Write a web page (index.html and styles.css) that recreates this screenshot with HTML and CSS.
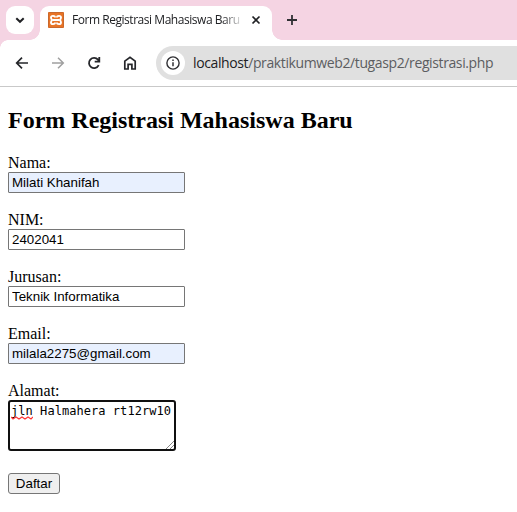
FILE: index.html
```html
<!DOCTYPE html>
<html lang="id">
<head>
<meta charset="utf-8">
<title>Form Registrasi Mahasiswa Baru</title>
<link rel="stylesheet" href="styles.css">
</head>
<body>
<header class="tabs">
  <div class="tab-search"><svg width="28" height="28" viewBox="0 0 28 28"><path d="M10.3 12.2 14 15.8l3.7-3.6" fill="none" stroke="#202124" stroke-width="2"/></svg></div>
  <div class="tab">
    <svg class="favicon" width="16" height="16" viewBox="0 0 16 16"><rect width="16" height="16" rx="1" fill="#e87325"/><rect x=".5" y=".5" width="15" height="15" rx="1" fill="none" stroke="#c8682d"/><g fill="none" stroke="#fff" stroke-width="1.9"><path d="M7 5.6V5.2Q7 3.9 5 3.9T3 5.5Q3 7.1 4.2 8 3 8.9 3 10.5 3 12.1 5 12.1T7 10.8V10.4M9 5.6V5.2Q9 3.9 11 3.9T13 5.5Q13 7.1 11.8 8 13 8.9 13 10.5 13 12.1 11 12.1T9 10.8V10.4M5 8h6"/></g></svg>
    <span class="tab-title">Form Registrasi Mahasiswa Baru</span>
    <svg class="close" width="10" height="10" viewBox="0 0 10 10"><path d="m1.5 1.5 7 7m0-7-7 7" stroke="#202124" stroke-width="1.7"/></svg>
  </div>
  <svg class="new-tab" width="12" height="12" viewBox="0 0 12 12"><path d="M6 1v10M1 6h10" stroke="#303034" stroke-width="1.8"/></svg>
</header>
<nav class="toolbar">
  <svg width="16" height="16" viewBox="0 0 16 16" fill="none" stroke="#25262a" stroke-width="1.7"><path d="M14 8H3M8 2.7 2.7 8 8 13.3"/></svg>
  <svg width="16" height="16" viewBox="0 0 16 16" fill="none" stroke="#a0a0a0" stroke-width="1.5"><path d="M2 8h11M8 2.7 13.3 8 8 13.3"/></svg>
  <svg width="16" height="16" viewBox="0 0 16 16" fill="none" stroke="#25262a" stroke-width="1.8"><path d="M12.7 10.2A5.1 5.1 0 1 1 12 4.7L13 6M13.3 2v4.6H8.7"/></svg>
  <svg width="16" height="16" viewBox="0 0 16 16" fill="none" stroke="#25262a" stroke-width="1.7"><path d="M2.8 6.1 8 2.2l5.2 3.9v7.9H9.9V9.3H6.1V14H2.8z"/></svg>
  <div class="address">
    <span class="info"><svg width="16" height="16" viewBox="0 0 16 16"><circle cx="8" cy="8" r="6.1" fill="none" stroke="#303034" stroke-width="1.4"/><path d="M8 7.3v4M8 4.6v1.5" stroke="#303034" stroke-width="1.5"/></svg></span>
    <span class="url"><b>localhost</b>/praktikumweb2/tugasp2/registrasi.php</span>
  </div>
</nav>
<main>
  <h2>Form Registrasi Mahasiswa Baru</h2>
  <form>
    <div class="field"><label for="nama">Nama:</label><input id="nama" class="autofill" value="Milati Khanifah"></div>
    <div class="field"><label for="nim">NIM:</label><input id="nim" value="2402041"></div>
    <div class="field"><label for="jurusan">Jurusan:</label><input id="jurusan" value="Teknik Informatika"></div>
    <div class="field"><label for="email">Email:</label><input id="email" class="autofill" value="milala2275@gmail.com"></div>
    <div class="field"><label>Alamat:</label><div class="textarea" role="textbox"><span class="misspelled">jln<svg class="squiggle" width="22" height="4" viewBox="0 0 22 4"><path d="m0 1 2 2 3-2 3 2 3-2 3 2 3-2 3 2 2-2" fill="none" stroke="#f33" stroke-width="1.2"/></svg></span> Halmahera rt12rw10<svg class="grip" width="8" height="8" viewBox="0 0 8 8"><path d="m0 8 8-8M4 8l4-4" stroke="#666" stroke-width=".8"/></svg></div></div>
    <button type="button">Daftar</button>
  </form>
</main>
</body>
</html>
```
FILE: styles.css
```css
* { box-sizing: border-box; }
body { margin: 0; background: #fff; color: #000; font: 16px/18px "Liberation Serif", serif; overflow: hidden; }
svg { display: block; flex: none; }
.tabs { display: flex; height: 40px; padding: 6px 6px 0; background: #f5d4e3; }
.tab-search { width: 28px; height: 28px; border-radius: 9px; background: #fff; }
.tab { position: relative; display: flex; align-items: center; width: 232px; height: 34px; margin-left: 6px; padding: 0 11px 6px 8px; border-radius: 9px 9px 0 0; background: #fff; }
.tab::before, .tab::after { content: ""; position: absolute; bottom: 0; width: 10px; height: 10px; }
.tab::before { left: -10px; background: radial-gradient(circle at 0 0, transparent 9.5px, #fff 10px); }
.tab::after { right: -10px; background: radial-gradient(circle at 100% 0, transparent 9.5px, #fff 10px); }
.tab-title { width: 172px; margin-left: 8px; overflow: hidden; white-space: nowrap; color: #202124; font: 12px/18px "Open Sans", "Noto Sans", sans-serif; letter-spacing: -.46px; -webkit-mask-image: linear-gradient(90deg, #000 150px, transparent 172px); mask-image: linear-gradient(90deg, #000 150px, transparent 172px); }
.close { margin-left: auto; }
.new-tab { margin: 8px 0 0 14px; }
.toolbar { position: relative; display: flex; align-items: center; gap: 20px; height: 47px; padding: 0 0 1px 14px; border-bottom: 1px solid #c9c9c9; }
.toolbar::before { content: ""; position: absolute; left: 0; top: 0; width: 8px; height: 8px; background: radial-gradient(circle at 100% 100%, transparent 7.5px, #f5d4e3 8px); }
.address { display: flex; align-items: center; flex: 1; height: 34px; margin-left: -2px; padding-left: 5px; border-radius: 17px 0 0 17px; background: #e0e0e0; }
.info { display: grid; place-items: center; width: 24px; height: 24px; border-radius: 50%; background: #fff; }
.url { margin-left: 8px; white-space: nowrap; color: #5c5d60; font: 14px/20px "Open Sans", "Noto Sans", sans-serif; letter-spacing: -.385px; }
.url b { color: #202124; font-weight: 400; }
main { padding: 20px 8px 0; }
h2 { margin: 0 0 20px; font-size: 24px; line-height: 27px; }
.field { margin-bottom: 18px; }
.field label { display: block; height: 18px; }
input { display: block; width: 177px; height: 21px; margin: 0; padding: 1px 3px; border: 1px solid #767676; border-radius: 1px; background: #fff; color: #000; font: 13.333px "Liberation Sans", sans-serif; }
.autofill { background: #e8f0fe; }
.textarea { position: relative; width: 168px; height: 51px; padding: 2px 0 0 2px; margin-bottom: 22px; border: 2px solid #101010; border-radius: 3px; white-space: nowrap; font: 12px/15px "DejaVu Sans Mono", monospace; letter-spacing: .05px; }
.misspelled { position: relative; margin-left: -1px; }
.squiggle { position: absolute; left: 0; bottom: -2px; }
.grip { position: absolute; right: 0; bottom: 0; }
button { display: block; width: 52px; height: 21px; margin: 0; padding: 0; border: 1px solid #767676; border-radius: 3px; background: #efefef; color: #000; font: 13.333px "Liberation Sans", sans-serif; }
```
